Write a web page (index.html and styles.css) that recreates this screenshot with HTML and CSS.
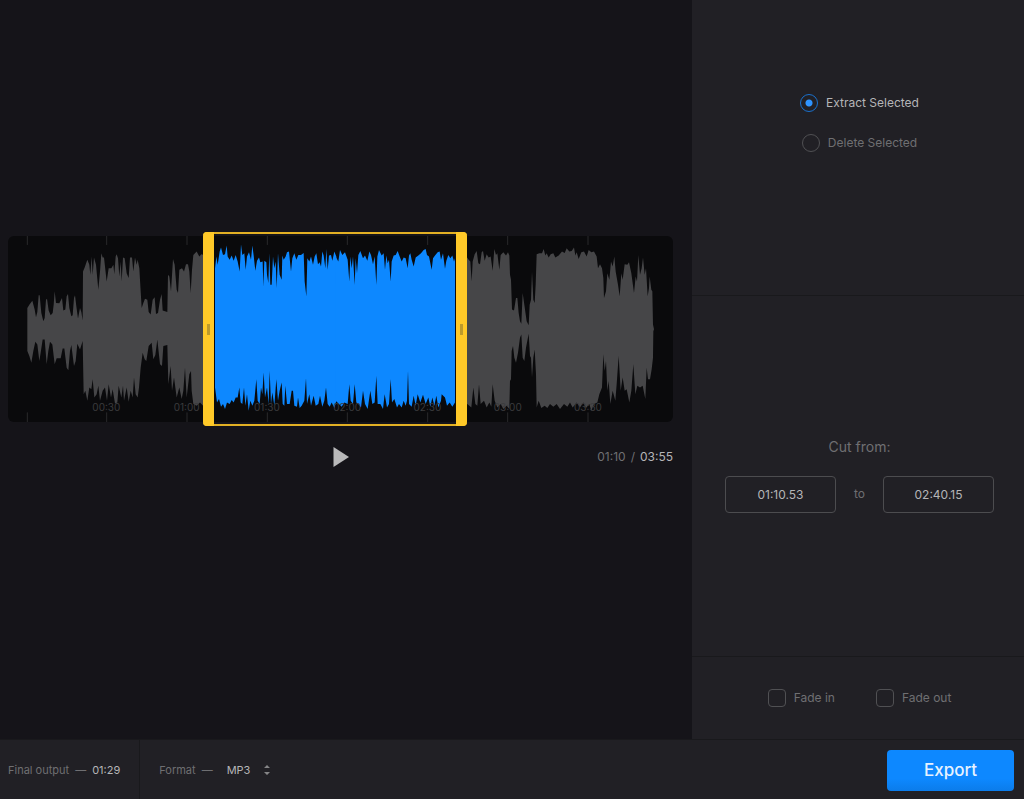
FILE: index.html
```html
<!DOCTYPE html>
<html lang="en">
<head>
<meta charset="utf-8">
<meta name="viewport" content="width=device-width, initial-scale=1">
<title>Audio Cutter</title>
<link rel="stylesheet" href="styles.css">
</head>
<body>
<div class="app">
  <main class="editor">
    <div class="timeline">
      <svg class="wave" viewBox="24 33 1995 561" preserveAspectRatio="none" aria-hidden="true">
        <path class="ticks" d="M82 33V60M320 33V60M561 33V60M802 33V60M1042 33V60M1283 33V60M1523 33V60M1764 33V60M82 565V594M320 565V594M561 565V594M802 565V594M1042 565V594M1283 565V594M1523 565V594M1764 565V594"/>
        <path class="wave-rest" d="M82 250 88 240 97 228 104 255 108 278 112 262 116 212 119 212 124 265 130 290 134 280 138 225 141 222 146 258 152 272 158 265 161 240 164 200 168 235 178 236 186 220 190 258 196 255 200 215 204 208 208 250 214 275 218 272 222 220 225 212 229 245 234 282 240 250 244 262 248 288 249 140 254 128 262 105 268 120 271 150 275 95 278 150 282 98 288 120 295 195 300 140 304 85 308 98 312 98 320 170 326 130 334 130 340 120 343 148 347 95 350 88 354 100 358 155 362 110 365 170 369 98 374 100 380 145 386 160 390 98 396 98 400 140 405 98 410 120 413 105 418 130 422 200 425 250 430 235 435 222 442 225 446 262 452 270 458 225 464 218 468 268 474 265 480 225 485 208 488 258 502 262 504 150 508 155 513 200 519 102 524 120 530 195 534 205 538 135 546 130 552 140 558 118 564 118 568 140 572 205 576 135 580 90 590 80 598 95 604 88 612 90L612 548 600 535 590 545 580 540 575 500 573 440 568 450 560 520 555 430 550 500 545 525 538 490 530 520 522 460 516 500 512 425 505 480 502 362 490 365 486 425 480 420 472 345 466 392 460 405 455 355 446 365 439 410 434 405 428 385 422 430 417 490 413 520 407 510 402 460 398 520 392 500 386 533 380 490 372 530 369 485 364 520 356 485 352 535 345 538 338 495 333 520 326 480 321 530 315 490 308 500 300 530 295 485 290 510 283 520 278 465 274 495 268 490 262 530 256 500 251 510 248 350 240 375 232 358 227 410 222 425 214 362 210 380 205 438 200 430 193 372 188 372 182 402 170 402 164 420 157 360 150 352 145 380 140 420 134 345 128 345 122 385 118 410 112 360 106 352 100 380 94 415 88 395 82 380Z"/>
        <path class="wave-selected" transform="translate(585 0)" d="M60 130 64 95 68 120 74 80 78 68 84 90 90 88 95 62 98 95 104 105 110 92 116 108 122 90 128 110 134 140 138 58 142 90 148 85 152 135 156 95 162 82 168 105 172 62 176 92 181 138 186 108 192 98 196 112 203 110 205 185 208 108 214 112 216 150 220 175 223 85 226 180 230 180 234 95 238 130 242 110 245 190 249 85 254 150 260 165 262 92 266 105 272 95 276 82 282 80 288 140 292 100 298 85 304 105 310 90 318 90 326 84 329 170 334 215 337 100 343 110 348 95 354 120 359 95 364 85 369 118 374 112 378 125 382 80 386 92 391 130 394 72 398 135 402 92 408 90 412 108 418 80 424 95L424 530 418 552 410 535 404 548 398 540 393 490 388 530 382 548 375 515 370 540 362 545 356 515 348 545 343 510 336 540 333 462 328 530 320 545 314 552 309 520 306 548 298 545 294 500 290 500 284 540 276 540 271 485 268 545 263 540 260 475 254 500 249 530 244 465 238 545 232 505 228 540 224 440 221 540 216 490 210 520 206 445 202 510 198 490 194 540 188 530 184 465 178 530 172 545 166 530 161 560 156 510 151 545 147 490 142 540 137 535 133 490 128 520 122 520 116 535 110 528 104 540 96 535 90 555 84 540 78 548 72 525 66 535 60 490Z"/>
        <path class="wave-selected" transform="translate(1005 0)" d="M2 95 10 110 15 75 22 90 30 82 38 105 43 170 46 95 50 130 54 95 59 180 62 100 66 145 70 90 76 78 84 100 90 92 97 108 103 80 108 90 114 118 119 95 124 180 127 95 132 75 140 92 146 85 150 135 154 92 158 115 162 105 167 170 170 110 176 92 182 90 188 78 194 95 200 110 206 98 212 100 218 130 222 92 226 85 230 105 236 125 242 98 250 92 258 85 266 75 272 72 276 90 282 95 290 135 294 100 300 92 308 82 314 80 318 105 324 85 330 132 334 108 340 90 346 100 352 92 357 110 360 100L360 535 352 548 344 535 336 545 330 520 320 510 318 530 310 550 304 515 298 545 292 520 286 548 280 520 272 540 264 512 256 535 248 510 242 545 236 515 230 548 222 540 219 440 216 530 212 545 206 530 200 550 192 540 186 550 178 525 171 535 167 465 162 540 156 550 149 510 144 555 136 540 128 540 124 455 119 535 112 540 106 500 98 555 90 540 84 500 78 550 70 540 64 535 59 480 54 540 47 530 43 480 38 540 28 535 20 548 12 540 2 530Z"/>
        <path class="wave-rest" transform="translate(1380 0)" d="M16 90 26 105 31 110 35 170 38 110 44 88 50 78 55 115 60 118 65 82 69 78 74 108 80 88 86 98 92 95 98 138 103 72 108 90 112 85 118 135 122 90 130 82 138 92 144 82 148 92 150 150 153 165 156 255 162 258 168 220 172 220 176 265 180 290 184 298 188 205 193 240 200 290 206 302 209 240 213 225 216 140 220 225 224 235 227 180 230 88 238 85 246 85 251 72 256 92 260 85 266 98 272 88 280 85 286 98 296 92 306 80 314 84 320 70 328 80 335 78 342 68 346 92 350 82 356 102 364 82 372 80 380 95 386 75 394 82 402 80 410 95 414 130 420 118 426 130 430 160 432 220 438 200 442 145 448 165 453 110 458 125 463 95 467 140 474 180 479 215 484 145 488 165 494 118 502 120 507 112 514 145 522 205 527 155 531 170 535 90 540 150 545 130 549 98 554 150 558 130 563 215 567 190 569 155 574 195 577 200 579 300 582 314L580 320 579 400 575 435 570 465 564 465 560 430 556 525 548 485 540 490 532 485 526 510 520 420 514 500 508 535 500 495 494 500 488 460 482 500 476 395 470 480 466 530 458 500 451 540 446 470 442 500 438 410 434 440 430 390 426 490 418 510 412 535 402 540 394 560 388 540 378 552 370 535 360 550 350 535 338 550 330 535 322 548 312 540 300 555 290 540 280 548 270 540 262 552 254 545 244 552 236 530 230 550 228 450 224 375 220 400 216 460 213 400 210 395 206 328 198 370 193 410 188 400 184 330 180 340 174 385 168 415 163 400 159 365 155 380 153 465 150 470 148 555 140 545 130 555 122 540 112 550 104 530 98 480 94 548 88 535 80 550 72 530 62 540 57 480 52 545 46 540 40 490 34 550 28 545 16 535Z"/>
      </svg>
      <div class="labels">
        <span>00:30</span><span>01:00</span><span>01:30</span><span>02:00</span><span>02:30</span><span>03:00</span><span>03:30</span>
      </div>
      <div class="selection">
        <button class="handle" type="button" aria-label="Selection start"></button>
        <button class="handle" type="button" aria-label="Selection end"></button>
      </div>
    </div>
    <div class="transport">
      <button class="play" type="button" aria-label="Play">
        <svg width="16" height="20" viewBox="0 0 16 20" aria-hidden="true"><path d="M.5 0 16 10 .5 20Z"/></svg>
      </button>
      <div class="clock"><span>01:10</span><span>/</span><span class="value">03:55</span></div>
    </div>
  </main>

  <aside class="sidebar">
    <section class="panel modes">
      <label class="option"><input class="radio" type="radio" name="mode" checked><span>Extract Selected</span></label>
      <label class="option"><input class="radio" type="radio" name="mode"><span>Delete Selected</span></label>
    </section>
    <section class="panel cut">
      <h2 class="cut-title">Cut from:</h2>
      <div class="range">
        <input class="time" type="text" value="01:10.53" aria-label="Cut from">
        <span>to</span>
        <input class="time" type="text" value="02:40.15" aria-label="Cut to">
      </div>
    </section>
    <section class="panel fades">
      <label class="option"><input class="check" type="checkbox"><span>Fade in</span></label>
      <label class="option"><input class="check" type="checkbox"><span>Fade out</span></label>
    </section>
  </aside>

  <footer class="footer">
    <div class="output"><span>Final output</span><span>—</span><span class="value">01:29</span></div>
    <div class="format">
      <label class="format-label" for="format"><span>Format</span><span>—</span></label>
      <span class="picker">
        <select class="select value" id="format"><option>MP3</option><option>WAV</option></select>
        <svg class="arrows" width="6" height="12" viewBox="0 0 6 12" aria-hidden="true"><path d="M0 4 3 1 6 4ZM0 8 3 11 6 8Z"/></svg>
      </span>
    </div>
    <button class="export" type="button">Export</button>
  </footer>
</div>
</body>
</html>
```
FILE: styles.css
```css
* { box-sizing: border-box; }

body {
  margin: 0;
  background: #151419;
  color: #6f6f72;
  font: 12px/16px Inter, "Liberation Sans", sans-serif;
}

button, input, select { margin: 0; font: inherit; }

.app {
  display: grid;
  grid-template-columns: minmax(0, 1fr) 332px;
  grid-template-rows: 1fr 60px;
  min-height: 100vh;
}

.editor {
  display: flex;
  flex-direction: column;
  justify-content: center;
  padding: 0 19px 0 8px;
}

.timeline {
  position: relative;
  height: 186px;
  border-radius: 6px;
  background: #0a0a0c;
}

.wave { display: block; width: 100%; height: 100%; }
.wave-rest { fill: #464648; }
.wave-selected { fill: #0d88ff; }
.ticks { fill: none; stroke: #29292b; stroke-width: 3; }

.labels {
  position: absolute;
  inset: auto 6.75% 9px 8.75%;
  display: grid;
  grid-template-columns: repeat(7, 1fr);
  color: #3b3b3d;
  font-size: 10px;
  line-height: 12px;
  text-align: center;
}

.selection {
  position: absolute;
  inset: -4px 31% -4px 29.3%;
  display: flex;
  justify-content: space-between;
  border: solid #e2b024;
  border-width: 2px 0;
  border-radius: 4px;
}

.handle {
  display: grid;
  place-items: center;
  width: 11px;
  margin: -2px 0;
  padding: 0;
  border: 0;
  border-radius: 4px 0 0 4px;
  background: #ffc928;
}
.handle:last-child { border-radius: 0 4px 4px 0; }
.handle::before {
  content: "";
  width: 3px;
  height: 11px;
  background: #bd9a2b;
}

.transport {
  display: grid;
  grid-template-columns: 1fr auto 1fr;
  align-items: center;
  height: 81px;
  padding-bottom: 12px;
}

.play {
  grid-column: 2;
  display: block;
  padding: 0;
  border: 0;
  background: none;
}
.play svg { display: block; fill: #b9b9ba; }

.clock {
  display: flex;
  justify-content: flex-end;
  gap: 5px;
}

.value { color: #b5b5b7; }

.sidebar {
  display: grid;
  grid-template-rows: 9fr 11fr 82px;
  background: #212025;
}

.panel { display: flex; padding-left: 3px; border-bottom: 1px solid #19191c; }
.panel:last-child { border-bottom: 0; }

.modes {
  flex-direction: column;
  align-items: center;
  justify-content: center;
  gap: 22px;
  padding-bottom: 48px;
}

.option { display: flex; align-items: center; gap: 8px; }
.modes .option:has(:checked) { color: #b5b5b7; }

.radio, .check {
  appearance: none;
  width: 18px;
  height: 18px;
  border: 1px solid #505053;
}
.radio { border-radius: 50%; }
.radio:checked {
  border-color: #1a70cc;
  background: radial-gradient(circle, #2f94ff 3px, transparent 4px);
}
.check { border-radius: 4px; }

.cut {
  flex-direction: column;
  align-items: center;
  justify-content: center;
  gap: 19px;
  padding-bottom: 2px;
}

.cut-title { margin: 0; font-size: 14px; font-weight: 400; line-height: 20px; }

.range { display: flex; align-items: center; gap: 18px; }

.time {
  width: 111px;
  height: 37px;
  padding: 0;
  border: 1px solid #4c4c4f;
  border-radius: 4px;
  background: none;
  color: #b5b5b7;
  text-align: center;
}

.fades { align-items: center; justify-content: center; gap: 41px; }

.footer {
  grid-column: 1 / -1;
  display: flex;
  align-items: stretch;
  border-top: 1px solid #19191c;
  background: #212025;
  font-size: 11px;
}

.output, .format, .format-label { display: flex; align-items: center; }
.output, .format-label { gap: 6px; }
.output { padding: 0 19px 0 8px; border-right: 1px solid #19191c; }
.format { gap: 14px; padding-left: 19px; }

.picker { display: flex; align-items: center; gap: 12px; }
.select {
  appearance: none;
  padding: 0;
  border: 0;
  background: none;
}
.arrows { fill: #858587; }

.export {
  align-self: center;
  width: 127px;
  height: 41px;
  margin: 1px 10px 0 auto;
  border: 0;
  border-radius: 4px;
  background: linear-gradient(#0d88ff 70%, #0b7cea);
  color: #e6f2ff;
  font-size: 17px;
  font-weight: 500;
}
```
